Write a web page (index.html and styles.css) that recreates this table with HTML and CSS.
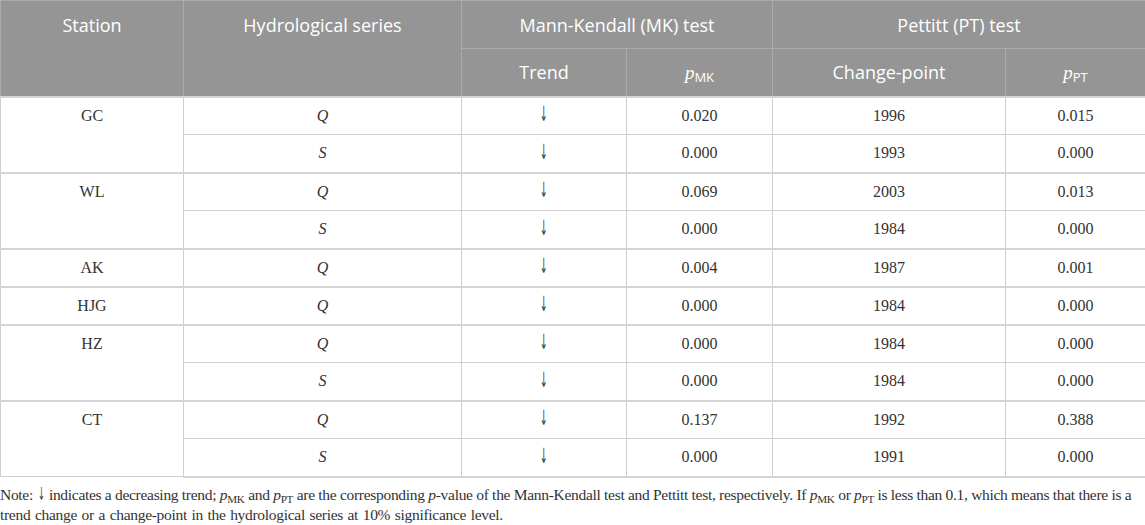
FILE: index.html
```html
<!DOCTYPE html>
<html lang="en">
<head>
  <meta charset="UTF-8" />
  <title>Trend and change-point tests</title>
  <link rel="stylesheet" href="styles.css">
</head>
<body>

  <table class="results">
    <colgroup>
      <col class="c-station">
      <col class="c-series">
      <col class="c-trend">
      <col class="c-pmk">
      <col class="c-cp">
      <col class="c-ppt">
    </colgroup>
    <thead>
      <tr class="head-top">
        <th rowspan="2">Station</th>
        <th rowspan="2">Hydrological series</th>
        <th colspan="2">Mann-Kendall (MK) test</th>
        <th colspan="2">Pettitt (PT) test</th>
      </tr>
      <tr class="head-sub">
        <th>Trend</th>
        <th><i>p</i><sub>MK</sub></th>
        <th>Change-point</th>
        <th><i>p</i><sub>PT</sub></th>
      </tr>
    </thead>
    <tbody>
      <tr class="group-start">
        <td class="station" rowspan="2">GC</td>
        <td><i>Q</i></td><td><span class="arrow">&#8595;</span></td><td>0.020</td><td>1996</td><td>0.015</td>
      </tr>
      <tr>
        <td><i>S</i></td><td><span class="arrow">&#8595;</span></td><td>0.000</td><td>1993</td><td>0.000</td>
      </tr>
      <tr class="group-start">
        <td class="station" rowspan="2">WL</td>
        <td><i>Q</i></td><td><span class="arrow">&#8595;</span></td><td>0.069</td><td>2003</td><td>0.013</td>
      </tr>
      <tr>
        <td><i>S</i></td><td><span class="arrow">&#8595;</span></td><td>0.000</td><td>1984</td><td>0.000</td>
      </tr>
      <tr class="group-start">
        <td class="station">AK</td>
        <td><i>Q</i></td><td><span class="arrow">&#8595;</span></td><td>0.004</td><td>1987</td><td>0.001</td>
      </tr>
      <tr class="group-start">
        <td class="station">HJG</td>
        <td><i>Q</i></td><td><span class="arrow">&#8595;</span></td><td>0.000</td><td>1984</td><td>0.000</td>
      </tr>
      <tr class="group-start">
        <td class="station" rowspan="2">HZ</td>
        <td><i>Q</i></td><td><span class="arrow">&#8595;</span></td><td>0.000</td><td>1984</td><td>0.000</td>
      </tr>
      <tr>
        <td><i>S</i></td><td><span class="arrow">&#8595;</span></td><td>0.000</td><td>1984</td><td>0.000</td>
      </tr>
      <tr class="group-start">
        <td class="station" rowspan="2">CT</td>
        <td><i>Q</i></td><td><span class="arrow">&#8595;</span></td><td>0.137</td><td>1992</td><td>0.388</td>
      </tr>
      <tr class="last">
        <td><i>S</i></td><td><span class="arrow">&#8595;</span></td><td>0.000</td><td>1991</td><td>0.000</td>
      </tr>
    </tbody>
  </table>

  <p class="note">
    Note: <span class="arrow">&#8595;</span> indicates a decreasing trend; <i>p</i><sub>MK</sub> and <i>p</i><sub>PT</sub> are the corresponding <i>p</i>-value of the Mann-Kendall test and Pettitt test, respectively. If <i>p</i><sub>MK</sub> or <i>p</i><sub>PT</sub> is less than 0.1, which means that there is a<br>
    <span class="spaced">trend change or a change-point in the hydrological series at 10% significance level.</span>
  </p>

</body>
</html>
```

FILE: styles.css
```css
* {
  box-sizing: border-box;
}

body {
  margin: 0;
  background: #fff;
  color: #333;
  font-family: 'Liberation Serif', 'Times New Roman', serif;
}

.results {
  width: 1145px;
  border-collapse: collapse;
  table-layout: fixed;
}

.c-station { width: 183px; }
.c-series  { width: 278px; }
.c-trend   { width: 165px; }
.c-pmk     { width: 146px; }
.c-cp      { width: 233px; }
.c-ppt     { width: 140px; }

th {
  background: #959595;
  color: #fff;
  font-family: 'Open Sans', 'Liberation Sans', sans-serif;
  font-weight: normal;
  font-size: 18px;
  line-height: 22px;
  text-align: center;
  vertical-align: middle;
  border: 1px solid #ababab;
  padding: 0;
}

.head-top th {
  height: 48px;
}

.head-top th[rowspan] {
  vertical-align: top;
  padding-top: 13px;
}

.head-sub th {
  height: 48px;
}

th i {
  font-family: 'Liberation Serif', serif;
  font-size: 19px;
}

sub {
  font-size: 0.72em;
  font-style: normal;
  vertical-align: -0.25em;
  line-height: 0;
}

th sub {
  font-family: 'Open Sans', 'Liberation Sans', sans-serif;
  font-size: 13px;
}

td {
  height: 38px;
  padding: 0;
  font-size: 16px;
  text-align: center;
  vertical-align: middle;
  border: 1px solid #cfcfcf;
}

td.station {
  vertical-align: top;
  padding-top: 9px;
}

.arrow {
  font-family: 'DejaVu Sans', sans-serif;
  font-size: 21px;
  line-height: 16px;
  color: #444;
  display: inline-block;
  transform: scaleX(0.45);
}

tr.group-start td {
  border-top: 2px solid #d4d4d4;
}

tr.last td {
  border-bottom: 2px solid #d4d4d4;
}

.note {
  margin: 7px 0 0;
  font-size: 15.5px;
  line-height: 20px;
  letter-spacing: -0.3px;
  white-space: nowrap;
  color: #333;
}

.note .arrow {
  font-size: 18px;
  line-height: 0;
  margin: 0 -3px;
}

.note .spaced {
  word-spacing: 1px;
}

.note sub {
  font-size: 0.72em;
}
```
